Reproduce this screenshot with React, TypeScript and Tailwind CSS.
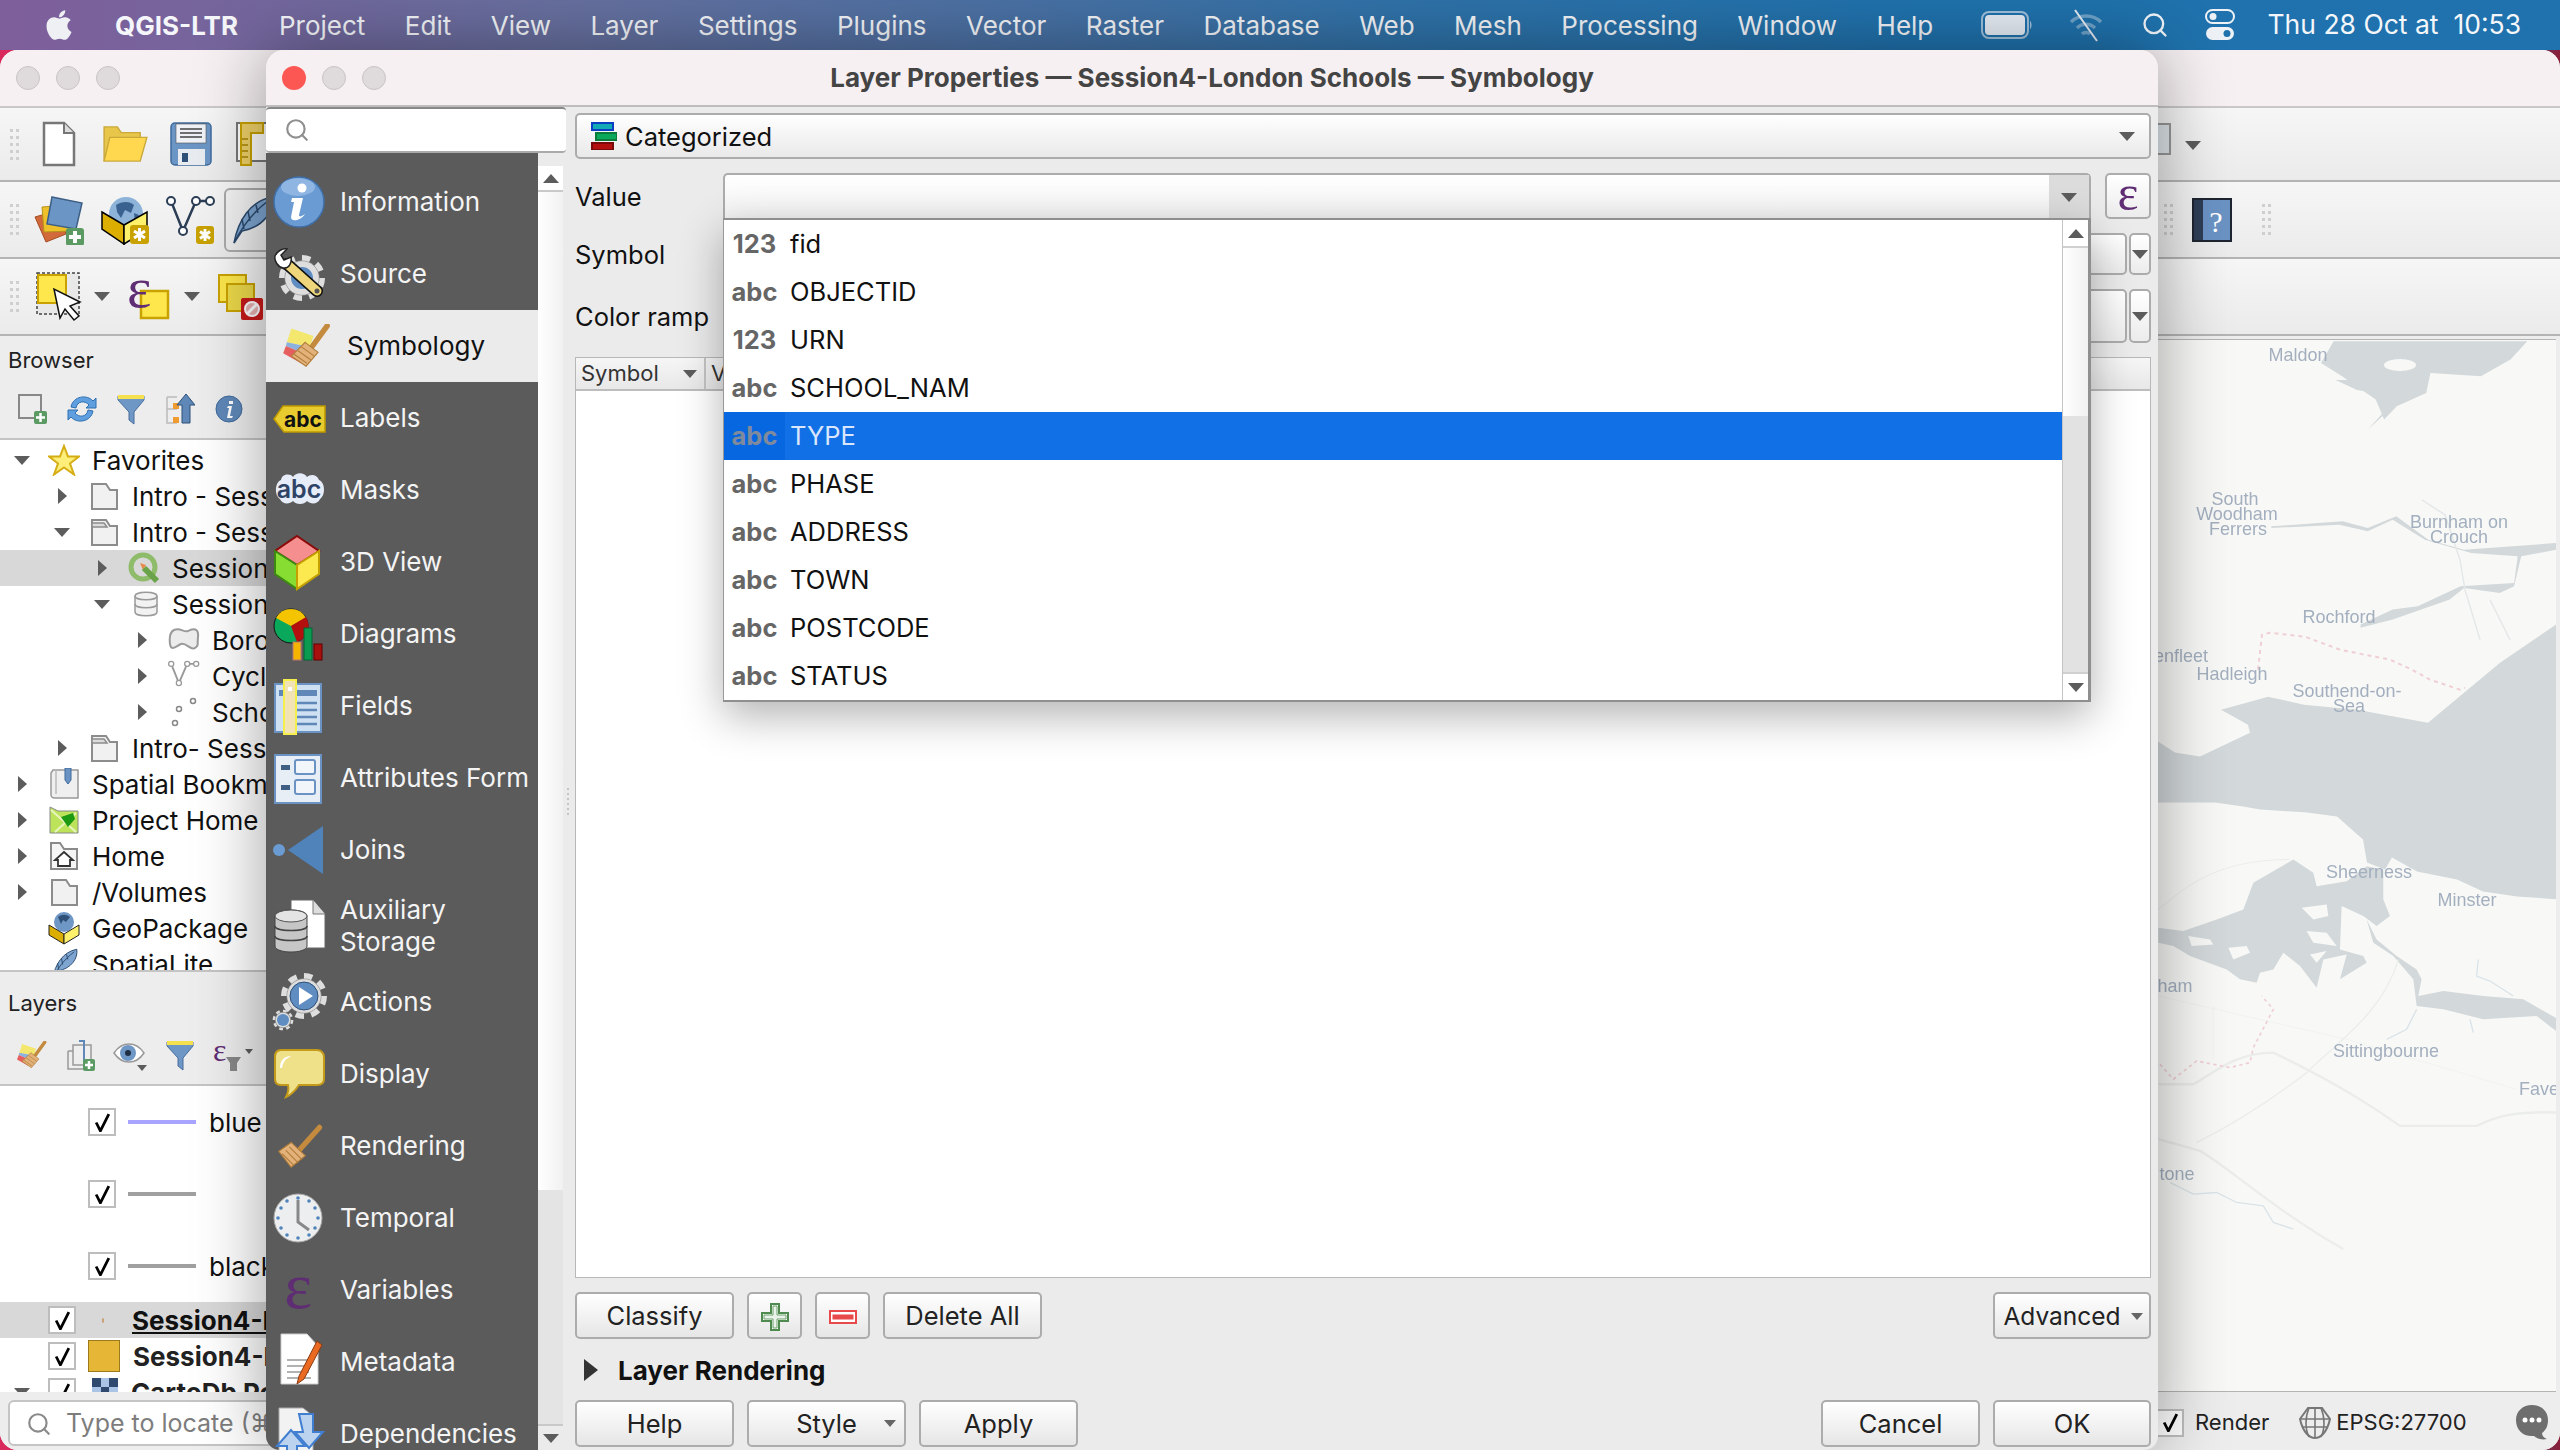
import { ReactNode } from "react";
import { FaApple } from "react-icons/fa";
import { Search } from "lucide-react";

const serif = "Liberation Serif, serif";

function Tri({ dir = "down", className = "" }: { dir?: "down" | "right" | "up"; className?: string }) {
  const pts = dir === "down" ? "0,0 16,0 8,9" : dir === "up" ? "0,9 16,9 8,0" : "0,0 9,8 0,16";
  const vb = dir === "right" ? "0 0 9 16" : "0 0 16 9";
  return (
    <svg viewBox={vb} className={className}>
      <polygon points={pts} fill="#5c5c5c" />
    </svg>
  );
}

function Grip() {
  return (
    <div className="grid w-[8px] grid-cols-2 gap-x-[3px] gap-y-[4px]">
      {Array.from({ length: 10 }).map((_, i) => (
        <span key={i} className="h-[3px] w-[3px] bg-[#cfcfcf]" />
      ))}
    </div>
  );
}

function Lights({ active }: { active?: boolean }) {
  return (
    <div className="flex items-center gap-[16px]">
      <span className={active ? "h-[24px] w-[24px] rounded-full bg-[#fc5753]" : "h-[24px] w-[24px] rounded-full border border-[#c8c3c5] bg-[#dfdadc]"} />
      <span className="h-[24px] w-[24px] rounded-full border border-[#c8c3c5] bg-[#dfdadc]" />
      <span className="h-[24px] w-[24px] rounded-full border border-[#c8c3c5] bg-[#dfdadc]" />
    </div>
  );
}

/* ---- toolbar icons ---- */
const NewDoc = () => (
  <svg viewBox="0 0 34 46" className="h-[46px] w-[34px]">
    <path d="M2 2h20l10 10v32H2z" fill="#fff" stroke="#777" strokeWidth="2.5" />
    <path d="M22 2v10h10" fill="#ddd" stroke="#777" strokeWidth="2" />
  </svg>
);
const Folder = () => (
  <svg viewBox="0 0 48 40" className="h-[38px] w-[46px]">
    <path d="M2 38V2h14l4 6h20v6" fill="#e8c64a" stroke="#c9a93a" strokeWidth="1.5" />
    <path d="M2 38l6-25h39l-7 25z" fill="#ffd84f" stroke="#c9a93a" strokeWidth="1.5" />
  </svg>
);
const Floppy = () => (
  <svg viewBox="0 0 42 44" className="h-[44px] w-[42px]">
    <rect x="1" y="1" width="40" height="42" rx="4" fill="#6b95c4" stroke="#3f6a9c" strokeWidth="1.5" />
    <rect x="6" y="2" width="30" height="19" fill="#eef1f5" stroke="#555" strokeWidth=".6" />
    <path d="M10 7h22M10 11h22M10 15h22" stroke="#444" strokeWidth="1.5" />
    <rect x="8" y="27" width="27" height="16" fill="#e8ecf1" />
    <rect x="12" y="31" width="6" height="9" fill="#2f5178" />
  </svg>
);
const LayoutIcon = () => (
  <svg viewBox="0 0 34 46" className="h-[46px] w-[34px]">
    <rect x="1" y="2" width="40" height="38" fill="#fff" stroke="#777" strokeWidth="2" />
    <path d="M5 2h22v10H15v32H5z" fill="#f0d26a" stroke="#c9a200" strokeWidth="2" />
    <path d="M6 18h6M6 24h6M6 30h6M6 36h6" stroke="#a88500" strokeWidth="1.5" />
  </svg>
);
const AddLayers = () => (
  <svg viewBox="0 0 50 50" className="h-[50px] w-[50px]">
    <path d="M1 22l24-7 7 24-20 8z" fill="#d2693a" stroke="#a34d23" />
    <path d="M8 12l26-2 2 26-26 1z" fill="#eec12a" stroke="#b8921a" />
    <path d="M20 5l30 6-6 26-29-5z" fill="#6b95c4" stroke="#3e5f85" strokeWidth="1.5" transform="translate(-2 -3)" />
    <rect x="32" y="33" width="18" height="18" rx="3" fill="#5b9a62" />
    <path d="M41 36v12M35 42h12" stroke="#fff" strokeWidth="4" />
  </svg>
);
const AddGlobe = () => (
  <svg viewBox="0 0 50 50" className="h-[50px] w-[50px]">
    <circle cx="26" cy="19" r="17" fill="#8db3d9" />
    <path d="M16 10c6-4 14-4 18 0l-3 8-6-3-4 8-4-6zM34 18l5 2-4 7z" fill="#3a6290" />
    <path d="M2 17l22 13v19L2 34z" fill="#dcae00" stroke="#000" strokeWidth="1.5" />
    <path d="M24 30l23-13v18L24 49z" fill="#fdf06a" stroke="#000" strokeWidth="1.5" />
    <rect x="30" y="30" width="19" height="19" rx="3" fill="#c9a200" />
    <path d="M39.500 33v13M34 36l11 7M45 36l-11 7" stroke="#fff" strokeWidth="3" />
  </svg>
);
const Asterisk = ({ x, y }: { x: number; y: number }) => (
  <g transform={`translate(${x} ${y})`}>
    <rect width="18" height="18" rx="3" fill="#c9a200" />
    <path d="M9 3v12M4 5.500l10 7M14 5.500l-10 7" stroke="#fff" strokeWidth="3" />
  </g>
);
const AddVector = ({ small }: { small?: boolean }) => (
  <svg viewBox="0 0 50 50" className={small ? "h-[34px] w-[34px]" : "h-[50px] w-[50px]"}>
    <path d="M5 6l12 30L30 6h14" fill="none" stroke={small ? "#999" : "#2c3e55"} strokeWidth={small ? 3 : 2.5} />
    <circle cx="5" cy="6" r="4" fill="#fff" stroke={small ? "#999" : "#2c3e55"} strokeWidth="2" />
    <circle cx="17" cy="36" r="4" fill="#fff" stroke={small ? "#999" : "#2c3e55"} strokeWidth="2" />
    <circle cx="30" cy="6" r="4" fill="#fff" stroke={small ? "#999" : "#2c3e55"} strokeWidth="2" />
    <circle cx="44" cy="6" r="4" fill="#fff" stroke={small ? "#999" : "#2c3e55"} strokeWidth="2" />
    {!small && <Asterisk x={30} y={31} />}
  </svg>
);
const Feather = ({ className }: { className: string }) => (
  <svg viewBox="0 0 40 50" className={className}>
    <path d="M2 48C6 26 18 6 40 2c2 14-8 30-30 34z" fill="#7ea6d1" stroke="#2c4a6e" strokeWidth="1.5" />
    <path d="M2 48C10 32 20 18 36 6M12 34l-2-10M18 26l-2-10M26 18l-2-8" stroke="#2c4a6e" strokeWidth="1.5" fill="none" />
  </svg>
);
const SelectIcon = () => (
  <svg viewBox="0 0 46 50" className="h-[50px] w-[46px]">
    <rect x="1" y="1" width="42" height="41" fill="#e8e8e8" stroke="#444" strokeWidth="1.5" strokeDasharray="3 2" />
    <rect x="2" y="3" width="28" height="28" fill="#fde74c" stroke="#c9a200" strokeWidth="2" />
    <path d="M18 17l6 29 5-9 9 11 5-4-9-10 10-4z" fill="#fff" stroke="#111" strokeWidth="1.5" />
  </svg>
);
const EpsSquare = () => (
  <svg viewBox="0 0 40 46" className="h-[46px] w-[40px] overflow-visible">
    <rect x="11" y="17" width="27" height="27" fill="#fde74c" stroke="#c9a200" strokeWidth="2.5" />
    <text x="-3" y="33" fontFamily={serif} fontSize="58" fill="#5f2d73">ε</text>
  </svg>
);
const DeselectIcon = () => (
  <svg viewBox="0 0 46 46" className="h-[46px] w-[46px]">
    <rect x="1" y="1" width="27" height="27" fill="#fde74c" stroke="#c9a200" strokeWidth="2" />
    <rect x="9" y="10" width="27" height="27" fill="#ecd94a" stroke="#c9a200" strokeWidth="2" />
    <rect x="23" y="24" width="22" height="22" rx="2" fill="#c81a1a" />
    <circle cx="34" cy="35" r="7" fill="#e9b3b3" stroke="#fff" strokeWidth="2" />
    <path d="M29 40l10-10" stroke="#fff" strokeWidth="3" />
  </svg>
);
const HelpBook = () => (
  <svg viewBox="0 0 40 44" className="h-[44px] w-[40px]">
    <rect x="0" y="0" width="40" height="44" fill="#1e2530" />
    <rect x="2" y="2" width="9" height="40" fill="#2e3e55" />
    <rect x="11" y="2" width="27" height="40" fill="#6a93c4" />
    <text x="24" y="34" textAnchor="middle" fontFamily={serif} fontSize="30" fill="#fff">?</text>
  </svg>
);

/* ---- small panel icons ---- */
const Mini = ({ children, w = 30, h = 32 }: { children: ReactNode; w?: number; h?: number }) => (
  <svg viewBox={`0 0 ${w} ${h}`} style={{ width: w, height: h }}>{children}</svg>
);
const Funnel = () => (
  <Mini>
    <path d="M2 3h26v4L18 19v12l-5-4v-8L2 7z" fill="#6f97c5" stroke="#486f9d" />
    <rect x="2" y="2" width="26" height="4" fill="#f5e04f" />
  </Mini>
);
const BrushIcon = ({ className, tri = false }: { className: string; tri?: boolean }) => (
  <svg viewBox="0 0 52 48" className={className}>
    {tri && (
      <>
        <path d="M9 5l24 8-4 12L4 20z" fill="#f4e76e" />
        <path d="M4 20l25 5-5 8L3 24z" fill="#8cb1dd" />
        <path d="M3 24l21 9-4 10L0 32z" fill="#e65f5f" />
      </>
    )}
    <path d={tri ? "M48 2L32 24" : "M48 3L24 30"} stroke="#c48a3e" strokeWidth="6" strokeLinecap="round" />
    <path d={tri ? "M24 20l14 11-13 15-16-11z" : "M16 20l16 15-16 13L2 30z"} fill="#e2b27a" stroke="#b07c3a" strokeWidth="1.2" />
    <path d={tri ? "M20 25l14 10M16 29l14 10M12 33l14 10" : "M14 25l14 14M10 29l14 14M6 33l13 13"} stroke="#b07c3a" strokeWidth="1.2" />
  </svg>
);

/* ---- sidebar icons ---- */
const Ic = ({ children }: { children: ReactNode }) => (
  <svg viewBox="0 0 54 56" className="h-[56px] w-[54px] shrink-0 overflow-visible">{children}</svg>
);
const Gear = ({ cx, cy, r }: { cx: number; cy: number; r: number }) => (
  <g>
    <circle cx={cx} cy={cy} r={r} fill="none" stroke="#dedede" strokeWidth={r * 0.3} strokeDasharray={`${r * 0.42} ${r * 0.36}`} />
    <circle cx={cx} cy={cy} r={r * 0.86} fill="#dedede" stroke="#8a8a8a" strokeWidth=".6" />
  </g>
);
const sideIcons: Record<string, ReactNode> = {
  Information: (
    <Ic>
      <circle cx="26" cy="28" r="25" fill="#6a9bd3" stroke="#3f6fa8" strokeWidth="1.5" />
      <ellipse cx="25" cy="13" rx="17" ry="9" fill="#8fb6e2" />
      <circle cx="29" cy="14" r="4.500" fill="#fff" />
      <path d="M19 24h11l-4 17c0 2 2 2 6-1-3 6-14 9-14 3l3-15h-3z" fill="#fff" />
    </Ic>
  ),
  Source: (
    <Ic>
      <Gear cx={29} cy={32} r={20} />
      <circle cx="29" cy="32" r="11" fill="#5f8dc2" />
      <path d="M14 18l30 27" stroke="#111" strokeWidth="12" strokeLinecap="round" />
      <path d="M14 18l30 27" stroke="#f0d67a" strokeWidth="9" strokeLinecap="round" />
      <circle cx="44" cy="45" r="2.500" fill="#555" />
      <path d="M2 10c2-5 8-8 12-7l-6 6 3 5 7-3c1 6-2 12-8 11C5 21 1 15 2 10z" fill="#fff" stroke="#222" strokeWidth="1.5" />
    </Ic>
  ),
  Symbology: <BrushIcon className="h-[44px] w-[52px] shrink-0" tri />,
  Labels: (
    <Ic>
      <path d="M10 16h42v26H11L1 29z" fill="#e8cc2f" stroke="#bf9b00" strokeWidth="1.5" />
      <text x="30" y="37" textAnchor="middle" fontFamily="Inter, sans-serif" fontWeight="700" fontSize="21" fill="#111">abc</text>
    </Ic>
  ),
  Masks: (
    <Ic>
      <path d="M8 18c1-6 9-7 12-3 3-5 11-5 14 0 3-3 10-3 12 3 6 2 7 15 1 19-2 5-9 6-13 2-3 4-11 4-14 0-4 4-11 3-13-2-6-4-5-17 1-19z" fill="#e6edf9" />
      <text x="26" y="36" textAnchor="middle" fontFamily="Inter, sans-serif" fontWeight="600" fontSize="25" fill="#2f4366">abc</text>
    </Ic>
  ),
  "3D View": (
    <Ic>
      <path d="M24 2l22 15-22 14L2 17z" fill="#f58f8f" stroke="#8a0a0a" strokeWidth="2" />
      <path d="M2 17l22 14v24L2 40z" fill="#88dd33" stroke="#3c8a10" strokeWidth="2" />
      <path d="M24 31l22-14v23L24 55z" fill="#fce94f" stroke="#c4a000" strokeWidth="2" />
    </Ic>
  ),
  Diagrams: (
    <Ic>
      <circle cx="18" cy="20" r="17" fill="#0aa85a" stroke="#111" />
      <path d="M18 20L3 12A17 17 0 0 1 33 12z" fill="#f5c400" />
      <path d="M18 20l15-9a17 17 0 0 1-9 25z" fill="#b40f0f" />
      <rect x="20" y="36" width="8" height="18" fill="#f5b400" stroke="#b77" />
      <rect x="31" y="22" width="8" height="32" fill="#0a9a50" stroke="#063" />
      <rect x="41" y="38" width="8" height="16" fill="#a80f0f" stroke="#600" />
    </Ic>
  ),
  Fields: (
    <Ic>
      <rect x="2" y="6" width="46" height="48" fill="#cfe0f2" stroke="#6a93c4" strokeWidth="2" />
      <rect x="6" y="12" width="38" height="6" fill="#5f88b8" />
      <path d="M10 25h34M10 32h34M10 39h34M10 46h34" stroke="#5f88b8" strokeWidth="2.500" />
      <rect x="11" y="2" width="12" height="54" fill="#f1e3b4" stroke="#f4ef4d" strokeWidth="2" />
      <rect x="15" y="9" width="4" height="4" fill="#fff" />
    </Ic>
  ),
  "Attributes Form": (
    <Ic>
      <rect x="2" y="5" width="46" height="48" fill="#e8eef5" stroke="#6a93c4" strokeWidth="2" />
      <rect x="8" y="15" width="9" height="5" fill="#3f5f85" />
      <rect x="8" y="35" width="9" height="5" fill="#3f5f85" />
      <rect x="22" y="10" width="20" height="14" rx="2" fill="#f2f5f9" stroke="#6a93c4" strokeWidth="2" />
      <rect x="22" y="30" width="20" height="14" rx="2" fill="#f2f5f9" stroke="#6a93c4" strokeWidth="2" />
    </Ic>
  ),
  Joins: (
    <Ic>
      <circle cx="6" cy="28" r="6" fill="#6a9bd3" />
      <path d="M50 4v48L15 28z" fill="#4f83ba" />
    </Ic>
  ),
  "Auxiliary Storage": (
    <Ic>
      <path d="M18 2h22l12 14v34H18z" fill="#fff" stroke="#666" />
      <path d="M40 2v14h12" fill="#ddd" stroke="#777" />
      <path d="M2 18c0-8 32-8 32 0v30c0 8-32 8-32 0z" fill="#c6c6c6" stroke="#444" />
      <ellipse cx="18" cy="18" rx="16" ry="6" fill="#e4e4e4" stroke="#555" />
      <path d="M2 28c0 6 32 6 32 0M2 38c0 6 32 6 32 0" fill="none" stroke="#444" strokeWidth="1.500" />
    </Ic>
  ),
  Actions: (
    <Ic>
      <Gear cx={31} cy={22} r={20} />
      <circle cx="31" cy="22" r="14" fill="#5f8dc2" stroke="#2f5178" />
      <path d="M26 13l14 9-14 9z" fill="#fff" />
      <Gear cx={10} cy={46} r={9} />
      <circle cx="10" cy="46" r="6" fill="#5f8dc2" />
    </Ic>
  ),
  Display: (
    <Ic>
      <path d="M8 4h36c4 0 7 3 7 7v22c0 4-3 6-7 6H26c-4 6-8 10-13 12 2-4 3-8 2-12H8c-4 0-6-2-6-6V11c0-4 2-7 6-7z" fill="#efe08a" stroke="#c49a1a" strokeWidth="2" />
      <path d="M7 22c0-8 4-12 12-12-6 2-9 6-10 12z" fill="#fff" />
    </Ic>
  ),
  Rendering: <BrushIcon className="h-[50px] w-[46px] shrink-0" />,
  Temporal: (
    <Ic>
      <circle cx="25" cy="28" r="24" fill="#eceef0" stroke="#aaa" />
      <g fill="#4f83ba">
        <circle cx="25" cy="8" r="1.800" /><circle cx="25" cy="48" r="1.800" /><circle cx="5" cy="28" r="1.800" /><circle cx="45" cy="28" r="1.800" />
        <circle cx="14" cy="11" r="1.800" /><circle cx="36" cy="11" r="1.800" /><circle cx="14" cy="45" r="1.800" /><circle cx="36" cy="45" r="1.800" />
        <circle cx="8" cy="18" r="1.800" /><circle cx="42" cy="18" r="1.800" /><circle cx="8" cy="38" r="1.800" /><circle cx="42" cy="38" r="1.800" />
      </g>
      <path d="M25 10v22l11 8" fill="none" stroke="#888" strokeWidth="3" />
    </Ic>
  ),
  Variables: (
    <Ic>
      <text x="25" y="46" textAnchor="middle" fontFamily={serif} fontSize="66" fill="#5f2d73">ε</text>
    </Ic>
  ),
  Metadata: (
    <Ic>
      <path d="M8 0h26l11 12v38H8z" fill="#fff" stroke="#ccc" />
      <path d="M14 26h22M14 32h24M14 38h22M14 44h24" stroke="#999" strokeWidth="1.500" />
      <path d="M44 7L26 42l-2 8 7-5 18-34z" fill="#ea6a22" stroke="#8a3a10" />
    </Ic>
  ),
  Dependencies: (
    <Ic>
      <path d="M6 2h24l10 8v48H6z" fill="#f2f2f2" stroke="#aaa" />
      <path d="M26 8h14v18h10L36 42 22 26h8z" fill="#bcd3f0" stroke="#3f7ed0" strokeWidth="2" />
      <path d="M14 60V40H4l14-16 14 16h-8v20z" fill="#bcd3f0" stroke="#3f7ed0" strokeWidth="2" />
    </Ic>
  ),
};

const sideItems = ["Information", "Source", "Symbology", "Labels", "Masks", "3D View", "Diagrams", "Fields", "Attributes Form", "Joins", "Auxiliary Storage", "Actions", "Display", "Rendering", "Temporal", "Variables", "Metadata", "Dependencies"];

/* ---- browser tree ---- */
const FolderOutline = ({ open }: { open?: boolean }) => (
  <svg viewBox="0 0 30 30" className="h-[30px] w-[30px]">
    <path d="M3 28V3h14l4 6h7v19z" fill="#f1f1f1" stroke="#8c8c8c" strokeWidth="2" />
    {open && <path d="M3 10h15l-3-4H3z" fill="#dcdcdc" stroke="#8c8c8c" strokeWidth="1.5" />}
  </svg>
);
const treeIcons: Record<string, ReactNode> = {
  star: (
    <svg viewBox="0 0 32 32" className="h-[32px] w-[32px]">
      <path d="M16 2l4 10.500h11l-9 7 4 11-10-7-10 7 4-11-9-7h11z" fill="#fdee7a" stroke="#d5ad13" strokeWidth="2" />
    </svg>
  ),
  folder: <FolderOutline />,
  folderOpen: <FolderOutline open />,
  qgis: (
    <svg viewBox="0 0 32 32" className="h-[32px] w-[32px]">
      <circle cx="15" cy="15" r="12" fill="none" stroke="#8ebc6a" strokeWidth="5" />
      <path d="M12 11l6 2-3 5z" fill="#e88a4a" />
      <path d="M16 16l13 13" stroke="#6ba34a" strokeWidth="6" />
    </svg>
  ),
  db: (
    <svg viewBox="0 0 26 28" className="ml-[3px] h-[28px] w-[26px]">
      <path d="M2 6c0-5 22-5 22 0v16c0 5-22 5-22 0z" fill="#f2f2f2" stroke="#999" strokeWidth="1.500" />
      <path d="M2 6c0 5 22 5 22 0M2 14c0 5 22 5 22 0" fill="none" stroke="#999" strokeWidth="1.500" />
    </svg>
  ),
  poly: (
    <svg viewBox="0 0 32 26" className="h-[26px] w-[32px]">
      <path d="M6 3c6-3 10 3 14 1 5-3 11-3 10 6s1 8-3 11-9-6-14-4-10 8-11 0 0-12 4-14z" fill="#ececec" stroke="#9a9a9a" strokeWidth="2" />
    </svg>
  ),
  line: <AddVector small />,
  points: (
    <svg viewBox="0 0 32 32" className="h-[32px] w-[32px]">
      <circle cx="25" cy="5" r="2.500" fill="#fff" stroke="#888" strokeWidth="1.500" />
      <circle cx="11" cy="13" r="2.500" fill="#fff" stroke="#888" strokeWidth="1.500" />
      <circle cx="7" cy="27" r="2.500" fill="#fff" stroke="#888" strokeWidth="1.500" />
    </svg>
  ),
  bookmark: (
    <svg viewBox="0 0 30 32" className="h-[32px] w-[30px]">
      <path d="M4 2h25v28H6c-3 0-4-2-4-3V5z" fill="#efefef" stroke="#999" strokeWidth="1.500" />
      <path d="M7 2v24" stroke="#bbb" strokeWidth="1.500" />
      <path d="M16 0h6v12l-3 4-3-4z" fill="#6a93c4" stroke="#3f6a9c" />
    </svg>
  ),
  projectHome: (
    <svg viewBox="0 0 30 30" className="h-[30px] w-[30px]">
      <path d="M1 28V2l8 4h20v22z" fill="#bde35a" stroke="#888" />
      <path d="M2 5l25 22M27 8L6 27" stroke="#e8f5c0" strokeWidth="2" />
      <path d="M12 12l12-4 2 6-7 8z" fill="#1d9a12" />
    </svg>
  ),
  home: (
    <svg viewBox="0 0 30 30" className="h-[30px] w-[30px]">
      <path d="M2 28V2h9l4 6h13v20z" fill="#f5f5f5" stroke="#8a8a8a" strokeWidth="2" />
      <path d="M15 11l9 8h-3v6H9v-6H6z" fill="#fff" stroke="#333" strokeWidth="1.800" />
    </svg>
  ),
  geo: (
    <svg viewBox="0 0 32 34" className="h-[34px] w-[32px]">
      <circle cx="16" cy="11" r="10" fill="#6f97c5" />
      <path d="M10 6c4-3 8-3 12 0l-4 5-3-2-2 4z" fill="#2f5178" />
      <path d="M1 14l15 9v10L1 24z" fill="#dcae00" stroke="#222" />
      <path d="M16 23l15-9v10l-15 9z" fill="#fdf06a" stroke="#222" />
    </svg>
  ),
  feather: <Feather className="h-[32px] w-[28px]" />,
};
const treeRows: { pad: string; caret?: "down" | "right"; icon: string; label: string; sel?: boolean }[] = [
  { pad: "pl-[12px]", caret: "down", icon: "star", label: "Favorites" },
  { pad: "pl-[52px]", caret: "right", icon: "folder", label: "Intro - Session 1" },
  { pad: "pl-[52px]", caret: "down", icon: "folderOpen", label: "Intro - Session 4" },
  { pad: "pl-[92px]", caret: "right", icon: "qgis", label: "Session4.qgz", sel: true },
  { pad: "pl-[92px]", caret: "down", icon: "db", label: "Session4.gpkg" },
  { pad: "pl-[132px]", caret: "right", icon: "poly", label: "Boroughs" },
  { pad: "pl-[132px]", caret: "right", icon: "line", label: "Cycle" },
  { pad: "pl-[132px]", caret: "right", icon: "points", label: "Schools" },
  { pad: "pl-[52px]", caret: "right", icon: "folderOpen", label: "Intro- Session 5" },
  { pad: "pl-[12px]", caret: "right", icon: "bookmark", label: "Spatial Bookmarks" },
  { pad: "pl-[12px]", caret: "right", icon: "projectHome", label: "Project Home" },
  { pad: "pl-[12px]", caret: "right", icon: "home", label: "Home" },
  { pad: "pl-[12px]", caret: "right", icon: "folder", label: "/Volumes" },
  { pad: "pl-[12px]", icon: "geo", label: "GeoPackage" },
  { pad: "pl-[12px]", icon: "feather", label: "SpatiaLite" },
];

function Check({ className = "" }: { className?: string }) {
  return (
    <span className={"flex h-[28px] w-[28px] shrink-0 items-center justify-center border-2 border-[#bdbdbd] bg-white " + className}>
      <svg viewBox="0 0 18 18" className="h-[19px] w-[19px]">
        <path d="M3 9l4 8L15 1" fill="none" stroke="#000" strokeWidth="2.600" />
      </svg>
    </span>
  );
}

function Btn({ children, className = "" }: { children: ReactNode; className?: string }) {
  return (
    <div className={"flex h-[47px] items-center justify-center rounded-[5px] border-2 border-[#acacac] bg-gradient-to-b from-white to-[#e6e6e6] pt-[2px] text-[25.5px] text-[#222] " + className}>
      {children}
    </div>
  );
}

const fields = [
  ["123", "fid"],
  ["abc", "OBJECTID"],
  ["123", "URN"],
  ["abc", "SCHOOL_NAM"],
  ["abc", "TYPE"],
  ["abc", "PHASE"],
  ["abc", "ADDRESS"],
  ["abc", "TOWN"],
  ["abc", "POSTCODE"],
  ["abc", "STATUS"],
];

const menus = [
  "Project", "Edit", "View", "Layer", "Settings", "Plugins", "Vector", "Raster", "Database", "Web", "Mesh", "Processing", "Window", "Help",
];

const mapLabels: [string, number, number][] = [
  ["Maldon", 2298, 361],
  ["South", 2235, 505],
  ["Woodham", 2237, 520],
  ["Ferrers", 2238, 535],
  ["Burnham on", 2459, 528],
  ["Crouch", 2459, 543],
  ["Rochford", 2339, 623],
  ["Hadleigh", 2232, 680],
  ["Southend-on-", 2347, 697],
  ["Sea", 2349, 712],
  ["Sheerness", 2369, 879],
  ["Minster", 2467, 907],
  ["Sittingbourne", 2386, 1058],
  ["Fave", 2539, 1096],
  ["ham", 2175, 993],
  ["tone", 2177, 1181],
  ["enfleet", 2181, 662],
];

function MapArt() {
  return (
    <svg viewBox="2158 340 398 1052" preserveAspectRatio="none" className="h-full w-[398px] blur-[0.5px]">
      <rect x="2158" y="340" width="402" height="1052" fill="#f8f9f7" />
      <g fill="#d3d8da">
        <path d="M2158 742L2175 753L2200 757L2250 733L2248 725L2221 710L2268 697L2304 705L2357 710L2428 723L2500 663L2560 622V900L2517 897L2483 892L2457 880L2417 872L2392 858L2385 870L2367 863L2363 840L2337 817L2307 813L2260 810L2243 807L2215 803H2158Z" />
        <path transform="translate(2000 380) scale(.357 .333)" d="M760 440L960 425L1030 445L1110 410L1200 480L1300 510L1560 490V510L1460 530L1440 620L1400 640L1300 625L1260 660L1180 690L1100 720L1010 745V735L1100 690L1170 680L1290 620L1440 610L1450 530L1320 520L1190 480L1100 420L1030 455L950 435L760 445Z" />
        <path transform="translate(1900 0) scale(.421 .333)" d="M1030 1025H1490L1450 1080L1380 1130L1260 1120L1250 1180L1180 1220L1150 1260L1130 1200L1050 1130L1000 1090Z" />
        <path transform="translate(2000 380) scale(.357 .333)" d="M940 0H1190L1130 60L1080 100L1030 150L1080 90L1110 50L1000 30Z" />
        <g transform="translate(2150 800) scale(.3333)">
          <path d="M650 200L700 210L700 300L720 350L680 380L640 350L575 320L570 450L640 470L650 490L570 540L590 465L520 480L500 565L450 500L400 460L370 510L330 520L320 550L270 540L230 510L120 470L70 440L25 430V385L100 395L200 360L280 330L310 250L430 180L490 220L500 260L590 245Z" />
          <path d="M650 360L680 420L740 470L800 510L815 540L805 590L880 575L1000 590L1120 600L1225 660V700L1160 650L1000 660L880 630L800 620L790 540L730 470L670 430Z" />
        </g>
      </g>
      <g fill="#f8f9f7">
        <ellipse cx="2400" cy="365" rx="16" ry="6" />
        <g transform="translate(2150 800) scale(.3333)">
          <path d="M115 410L180 420L190 435L125 440Z" />
          <path d="M235 445L290 440L300 460L250 480Z" />
          <path d="M455 325L530 315L535 350L490 360Z" />
          <path d="M470 395L530 400L560 440L490 430Z" />
          <path d="M480 465L530 455L500 490Z" />
        </g>
      </g>
      <g fill="none" stroke="#ebedeb" strokeWidth="1.500" transform="translate(2150 800) scale(.3333)">
        <path d="M25 855H130C180 830 250 760 370 760C450 800 580 860 750 980H980C1040 950 1100 935 1225 940" strokeWidth="7" />
        <path d="M25 1020L150 1055C230 1100 370 1230 580 1350" strokeWidth="7" />
        <path d="M140 1030C260 970 380 890 470 820C560 730 700 640 745 480" strokeWidth="4" />
        <path d="M25 590L590 720L1100 870" />
        <path d="M190 620V780" />
        <path d="M25 330C100 270 190 180 420 180" strokeWidth="3" />
      </g>
      <g fill="none" stroke="#f0cfd4" strokeWidth="2" strokeDasharray="4 4">
        <path transform="translate(2150 800) scale(.3333)" d="M30 795L70 840L140 785L240 805L300 790L310 745L370 630L335 590" strokeWidth="5" strokeDasharray="10 10" />
        <path d="M2258 670L2262 635L2270 633L2305 637L2340 650L2390 660L2412 670L2430 680L2460 690L2465 688" />
      </g>
      <g fill="none" stroke="#dae3e8" strokeWidth="1.500">
        <path transform="translate(2150 800) scale(.3333)" d="M60 1150L130 1185L200 1180L260 1210L340 1220L370 1270L430 1290" strokeWidth="4" />
        <path d="M2422 500L2445 515L2460 560L2465 590L2480 640M2490 600L2510 640" stroke="#e4e8e9" />
        <path transform="translate(2150 800) scale(.3333)" d="M985 480L980 530L1020 545L1090 590M960 660L970 700M800 630L770 690L710 720" strokeWidth="4" />
      </g>
      <g fontFamily="Liberation Sans, sans-serif" fontSize="18" fill="#a3afbf" textAnchor="middle">
        {mapLabels.map(([t, x, y]) => (
          <text key={t} x={x} y={y}>{t}</text>
        ))}
      </g>
    </svg>
  );
}

function MainWindow() {
  return (
    <div className="flex min-h-0 flex-1 flex-col overflow-hidden rounded-[18px] bg-[#ededed]">
      <div className="h-[56px] shrink-0 bg-[#f6f0f2] pl-[16px] pt-[16px]">
        <Lights />
      </div>
      <div className="flex h-[76px] shrink-0 items-center border-y-2 border-t-[#c9c9c9] border-b-[#b4b4b4] bg-gradient-to-b from-[#f6f6f6] to-[#ebebeb]">
        <div className="flex w-[2158px] shrink-0 items-center pl-[10px]">
          <Grip />
          <div className="ml-[24px]"><NewDoc /></div>
          <div className="ml-[26px]"><Folder /></div>
          <div className="ml-[22px]"><Floppy /></div>
          <div className="ml-[24px]"><LayoutIcon /></div>
        </div>
        <div className="h-[32px] w-[13px] -translate-y-[5px] border-2 border-l-0 border-[#999] bg-[#dfe6ea]" />
        <Tri className="ml-[14px] mt-[3px] h-[9px] w-[16px]" />
      </div>
      <div className="flex h-[77px] shrink-0 items-center border-b-2 border-[#b4b4b4] bg-gradient-to-b from-[#f6f6f6] to-[#ebebeb]">
        <div className="flex w-[2164px] shrink-0 items-center pl-[10px]">
          <Grip />
          <div className="ml-[16px]"><AddLayers /></div>
          <div className="ml-[16px]"><AddGlobe /></div>
          <div className="ml-[16px]"><AddVector /></div>
          <div className="ml-[8px] flex h-[64px] w-[60px] items-center rounded-[6px] border-2 border-[#aaa] pl-[6px]">
            <Feather className="h-[50px] w-[40px]" />
          </div>
        </div>
        <Grip />
        <div className="ml-[20px]"><HelpBook /></div>
        <div className="ml-[30px]"><Grip /></div>
      </div>
      <div className="flex h-[77px] shrink-0 items-center border-b-2 border-[#b4b4b4] bg-gradient-to-b from-[#f6f6f6] to-[#ebebeb] pl-[10px]">
        <Grip />
        <div className="ml-[18px]"><SelectIcon /></div>
        <Tri className="ml-[12px] h-[9px] w-[16px]" />
        <div className="ml-[20px]"><EpsSquare /></div>
        <Tri className="ml-[14px] h-[9px] w-[16px]" />
        <div className="ml-[18px]"><DeselectIcon /></div>
      </div>

      <div className="flex min-h-0 flex-1">
        <div className="flex w-[300px] shrink-0 flex-col bg-[#ededed]">
          <div className="flex h-[44px] items-center pl-[8px] pt-[4px] text-[22px] text-[#222]">Browser</div>
          <div className="flex h-[58px] items-center gap-[19px] pl-[18px]">
            <Mini w={30} h={32}>
              <rect x="1" y="2" width="22" height="23" fill="none" stroke="#888" strokeWidth="2" />
              <rect x="16" y="18" width="13" height="13" rx="2" fill="#5b9a62" />
              <path d="M22.500 20v9M18 24.500h9" stroke="#fff" strokeWidth="2.500" />
            </Mini>
            <Mini w={30} h={32}>
              <path d="M4 14C6 3 20 1 26 8l3-3v10H19l3-3C18 7 10 8 9 15zM26 18c-2 11-16 13-22 6l-3 3V17h10l-3 3c4 5 12 4 13-3z" fill="#5f9fe0" stroke="#2f6fb0" />
            </Mini>
            <Funnel />
            <Mini w={30} h={32}>
              <path d="M2 4h10M2 4v26h10M2 16h10" stroke="#bbb" strokeWidth="1.500" fill="none" />
              <rect x="8" y="10" width="6" height="6" fill="#ef9b2f" />
              <rect x="8" y="24" width="6" height="6" fill="#ef9b2f" />
              <path d="M21 1l9 11h-5v18h-8V12h-5z" fill="#5f88b8" stroke="#2f5178" />
            </Mini>
            <Mini w={30} h={32}>
              <circle cx="15" cy="16" r="13" fill="#5f88b8" stroke="#3f6a9c" />
              <path d="M14 13h4l-2 10h3l-1 2h-5l2-10h-2zM15 8h4v3h-4z" fill="#fff" />
            </Mini>
          </div>
          <div className="h-[532px] overflow-hidden border-t-2 border-[#c4c4c4] bg-white pt-[2px]">
            {treeRows.map((r) => (
              <div key={r.label} className={"flex h-[36px] items-center text-[26px] text-[#111] " + r.pad + (r.sel ? " bg-[#d8d8d8]" : "")}>
                <span className="flex w-[20px] shrink-0 justify-center">
                  {r.caret === "down" && <Tri className="h-[9px] w-[16px]" />}
                  {r.caret === "right" && <Tri dir="right" className="h-[16px] w-[9px]" />}
                </span>
                <span className="ml-[16px] flex h-[34px] w-[32px] shrink-0 items-center justify-center">{treeIcons[r.icon]}</span>
                <span className="ml-[12px] whitespace-nowrap pt-[1px]">{r.label}</span>
              </div>
            ))}
          </div>
          <div className="flex h-[56px] items-end border-t-2 border-[#c4c4c4] pb-[6px] pl-[8px] text-[22px] text-[#222]">Layers</div>
          <div className="flex h-[58px] items-center gap-[18px] pl-[17px]">
            <BrushIcon className="h-[28px] w-[30px]" tri />
            <Mini w={30} h={32}>
              <path d="M8 6h18v20H8zM3 12h5M3 12v18h20v-4" fill="#eee" stroke="#999" strokeWidth="1.500" />
              <path d="M14 2h5v20" fill="none" stroke="#5f88b8" strokeWidth="2" />
              <rect x="18" y="20" width="12" height="12" rx="2" fill="#5b9a62" />
              <path d="M24 22v8M20 26h8" stroke="#fff" strokeWidth="2.500" />
            </Mini>
            <Mini w={34} h={32}>
              <path d="M1 14c8-12 22-12 30 0-8 12-22 12-30 0z" fill="#fff" stroke="#999" strokeWidth="1.500" />
              <circle cx="15" cy="14" r="8" fill="#6f97c5" />
              <circle cx="15" cy="14" r="3" fill="#1f2f44" />
              <path d="M24 26h10l-5 6z" fill="#5c5c5c" />
            </Mini>
            <Funnel />
            <Mini w={40} h={32}>
              <text x="0" y="22" fontFamily={serif} fontSize="32" fill="#5f2d73">ε</text>
              <path d="M13 18h15l-4 6v8h-7v-8z" fill="#888" />
              <path d="M32 10h8l-4 5z" fill="#5c5c5c" />
            </Mini>
          </div>
          <div className="min-h-0 flex-1 overflow-hidden border-t-2 border-[#c4c4c4] bg-white">
            {[
              ["blue", "bg-[#a8a4ff]"],
              ["", "bg-[#a0a0a0]"],
              ["black", "bg-[#a0a0a0]"],
            ].map(([t, c], i) => (
              <div key={i} className="flex h-[72px] items-center pl-[88px] text-[26px] text-[#111]">
                <Check />
                <span className={"ml-[12px] h-[4px] w-[68px] " + c} />
                <span className="ml-[13px]">{t}</span>
              </div>
            ))}
            <div className="flex h-[36px] items-center bg-[#d8d8d8] pl-[48px] text-[26px] font-bold text-[#111]">
              <Check />
              <span className="ml-[26px] h-[5px] w-[5px] rounded-full border border-[#c9a27a] bg-[#e8c9a8]" />
              <span className="ml-[28px] whitespace-nowrap underline decoration-2 underline-offset-2">Session4-London</span>
            </div>
            <div className="flex h-[36px] items-center pl-[48px] text-[26px] font-bold text-[#222]">
              <Check />
              <span className="ml-[12px] h-[32px] w-[32px] shrink-0 border border-[#9a7a1a] bg-[#e6b637]" />
              <span className="ml-[13px] whitespace-nowrap">Session4-London</span>
            </div>
            <div className="flex h-[36px] items-center pl-[12px] text-[26px] font-bold text-[#222]">
              <span className="flex w-[20px] shrink-0 justify-center"><Tri className="h-[9px] w-[16px]" /></span>
              <Check className="ml-[16px]" />
              <span className="ml-[16px] grid h-[28px] w-[26px] shrink-0 grid-cols-3 grid-rows-3">
                <span className="bg-[#2f4a6e]" /><span className="bg-[#a9c4e4]" /><span className="bg-[#2f4a6e]" />
                <span className="bg-[#a9c4e4]" /><span className="bg-[#2f4a6e]" /><span className="bg-[#a9c4e4]" />
                <span className="bg-[#2f4a6e]" /><span className="bg-[#a9c4e4]" /><span className="bg-[#2f4a6e]" />
              </span>
              <span className="ml-[13px] whitespace-nowrap">CartoDb Positron</span>
            </div>
          </div>
        </div>
        <div className="mr-[4px] mt-[3px] flex min-w-0 flex-1 justify-end overflow-hidden border-y border-[#b4b4b4] bg-[#f8f9f7]">
          <MapArt />
        </div>
      </div>

      <div className="flex h-[58px] shrink-0 items-center bg-[#ededed] pt-[3px]">
        <div className="flex w-[266px] shrink-0 pl-[8px]">
          <div className="flex h-[46px] w-[300px] shrink-0 items-center rounded-[6px] border-2 border-[#c4c4c4] bg-white pl-[16px] pt-[2px] text-[25px] text-[#7d7d7d]">
            <Search className="h-[26px] w-[26px] text-[#8a8a8a]" strokeWidth={2} />
            <span className="ml-[14px] whitespace-nowrap">Type to locate (⌘K)</span>
          </div>
        </div>
        <div className="ml-[1892px] flex h-[28px] w-[26px] shrink-0 items-center justify-center border-2 border-l-0 border-[#bdbdbd] bg-white">
          <svg viewBox="0 0 18 18" className="h-[19px] w-[19px]">
            <path d="M3 9l4 8L15 1" fill="none" stroke="#000" strokeWidth="2.600" />
          </svg>
        </div>
        <span className="ml-[11px] text-[22px] text-[#222]">Render</span>
        <svg viewBox="0 0 32 34" className="ml-[30px] h-[34px] w-[32px] shrink-0">
          <path d="M1 13L9 2h14l8 11c-3 14-10 19-15 19S4 27 1 13z" fill="none" stroke="#777" strokeWidth="2" />
          <path d="M1 13h30M4 21h24M10 31c-4-8-4-20 0-29M22 31c4-8 4-20 0-29M16 2v30" fill="none" stroke="#777" strokeWidth="1.600" />
        </svg>
        <span className="ml-[5px] text-[22px] text-[#222]">EPSG:27700</span>
        <svg viewBox="0 0 34 38" className="ml-[48px] h-[38px] w-[34px] shrink-0">
          <path d="M17 1c9 0 16 6 16 15 0 7-3 11-6 13 0 3 2 5 5 6-5 1-10 0-13-3C8 33 1 26 1 16 1 7 8 1 17 1z" fill="#6e6e6e" />
          <circle cx="10" cy="16" r="2.500" fill="#fff" /><circle cx="17" cy="16" r="2.500" fill="#fff" /><circle cx="24" cy="16" r="2.500" fill="#fff" />
        </svg>
      </div>
    </div>
  );
}

function Dialog() {
  return (
    <div className="absolute left-[266px] top-[50px] flex h-[1400px] w-[1892px] flex-col overflow-hidden rounded-t-[18px] rounded-b-[14px] bg-[#ebebeb] shadow-[0_0_70px_rgba(0,0,0,0.38)]">
      <div className="relative flex h-[57px] shrink-0 items-center border-b-2 border-[#bdbdbd] bg-[#f6f0f2] pl-[16px]">
        <Lights active />
        <span className="absolute inset-x-0 text-center text-[26px] font-bold text-[#444]">Layer Properties — Session4-London Schools — Symbology</span>
      </div>
      <div className="flex min-h-0 flex-1">
        <div className="flex w-[306px] shrink-0 flex-col overflow-hidden">
          <div className="flex h-[46px] w-[300px] shrink-0 items-center rounded-[4px] border-t-2 border-b-2 border-t-[#888] border-b-[#aaa] bg-white pl-[18px]">
            <Search className="h-[26px] w-[26px] text-[#8f8f8f]" strokeWidth={2} />
          </div>
          <div className="flex min-h-0 flex-1">
            <div className="w-[272px] shrink-0 bg-[#5b5b5b] pt-[13px]">
              {sideItems.map((s) => {
                const sel = s === "Symbology";
                const tall = s === "Auxiliary Storage";
                return (
                  <div key={s} className={(tall ? "h-[80px] " : "h-[72px] ") + "flex items-center " + (sel ? "bg-[#ebebeb] pl-[14px] text-[#111]" : "pl-[7px] text-[#f4f4f4]")}>
                    <span className="flex w-[54px] shrink-0 justify-center">{sideIcons[s]}</span>
                    <span className="ml-[13px] whitespace-pre-line text-[26px] leading-[32px]">{tall ? "Auxiliary\nStorage" : s}</span>
                  </div>
                );
              })}
            </div>
            <div className="flex w-[25px] shrink-0 flex-col pt-[13px]">
              <div className="flex h-[26px] shrink-0 items-center justify-center border-b-2 border-[#c9c9c9] bg-white">
                <Tri dir="up" className="h-[9px] w-[16px]" />
              </div>
              <div className="h-[998px] shrink-0 bg-gradient-to-r from-white to-[#f1f1f1]" />
              <div className="flex-1 bg-[#e4e4e4]" />
              <div className="flex h-[26px] shrink-0 items-center justify-center border-t-2 border-[#c9c9c9]">
                <Tri className="h-[9px] w-[16px]" />
              </div>
            </div>
            <div className="flex flex-1 flex-col items-center justify-center gap-[3px]">
              {[0, 1, 2, 3, 4, 5].map((d) => (
                <span key={d} className="h-[2px] w-[2px] bg-[#c4c4c4]" />
              ))}
            </div>
          </div>
        </div>
        <div className="flex min-w-0 flex-1 flex-col pl-[3px] pr-[7px] pt-[6px] text-[25.5px] text-[#111]">
          <div className="flex h-[46px] shrink-0 items-center rounded-[5px] border-2 border-[#acacac] bg-gradient-to-b from-white to-[#e9e9e9] pl-[14px] pr-[14px]">
            <svg viewBox="0 0 26 28" className="h-[28px] w-[26px]">
              <rect x="1" y="1" width="21" height="7" fill="#11aab5" stroke="#0a3fc4" strokeWidth="2" />
              <rect x="5" y="11" width="21" height="7" fill="#0aa85a" stroke="#0b7a3a" strokeWidth="2" />
              <rect x="1" y="21" width="21" height="7" fill="#b40f0f" stroke="#7a0a0a" strokeWidth="2" />
            </svg>
            <span className="ml-[8px] pt-[2px]">Categorized</span>
            <Tri className="ml-auto h-[9px] w-[16px]" />
          </div>
          <div className="mt-[14px] flex h-[46px] shrink-0 items-center">
            <span className="w-[148px] shrink-0 pt-[2px]">Value</span>
            <div className="relative flex h-[46px] w-[1368px] shrink-0 rounded-t-[5px] border-2 border-b-0 border-[#acacac] bg-gradient-to-b from-white to-[#f2f2f2]">
              <div className="flex-1" />
              <div className="flex w-[40px] items-center justify-center bg-[#dcdcdc]">
                <Tri className="h-[9px] w-[16px]" />
              </div>
              <div className="absolute -left-[2px] -right-[2px] top-[43px] z-10 h-[484px] overflow-hidden border-y-2 border-l border-r-[3px] border-t-[#8f8f8f] border-b-[#8f8f8f] border-l-[#999] border-r-[#8f8f8f] bg-white shadow-[0_14px_40px_rgba(0,0,0,0.3)]">
                <div className="flex h-full">
                  <div className="w-[1338px] shrink-0">
                    {fields.map(([k, n]) => {
                      const sel = n === "TYPE";
                      return (
                        <div key={n} className={"flex h-[48px] items-center " + (sel ? "bg-[#1270e6] text-[#d9e6fb]" : "text-[#111]")}>
                          <span className={"flex h-full w-[61px] shrink-0 items-center justify-center font-bold " + (sel ? "bg-[#0767e0] text-[#7f8a9c]" : "text-[#666]")}>{k}</span>
                          <span className="ml-[5px]">{n}</span>
                        </div>
                      );
                    })}
                  </div>
                  <div className="flex flex-1 flex-col border-l border-[#c4c4c4]">
                    <div className="flex h-[28px] shrink-0 items-center justify-center border-b-2 border-[#d0d0d0]">
                      <Tri dir="up" className="h-[9px] w-[16px]" />
                    </div>
                    <div className="h-[168px] shrink-0 bg-gradient-to-r from-white to-[#f1f1f1]" />
                    <div className="flex-1 bg-[#e2e2e2]" />
                    <div className="flex h-[28px] shrink-0 items-center justify-center border-t-2 border-[#d0d0d0]">
                      <Tri className="h-[9px] w-[16px]" />
                    </div>
                  </div>
                </div>
              </div>
            </div>
            <div className="ml-[14px] flex h-[46px] w-[46px] shrink-0 items-center justify-center rounded-[5px] border-2 border-[#acacac] bg-gradient-to-b from-white to-[#ececec] pb-[6px] font-['Liberation_Serif',serif] text-[50px] leading-none text-[#5f2d73]">ε</div>
          </div>
          <div className="mt-[14px] flex h-[42px] shrink-0 items-center">
            <span className="w-[148px] shrink-0 pt-[2px]">Symbol</span>
            <div className="h-full flex-1 rounded-[5px] border-2 border-[#acacac] bg-gradient-to-b from-white to-[#ececec]" />
            <div className="ml-[2px] flex h-full w-[22px] shrink-0 items-center justify-center rounded-[5px] border-2 border-[#acacac] bg-gradient-to-b from-white to-[#ececec]">
              <Tri className="h-[9px] w-[16px]" />
            </div>
          </div>
          <div className="mt-[14px] flex h-[54px] shrink-0 items-center">
            <span className="w-[148px] shrink-0 pt-[2px]">Color ramp</span>
            <div className="h-full flex-1 rounded-[5px] border-2 border-[#acacac] bg-gradient-to-b from-white to-[#ececec]" />
            <div className="ml-[2px] flex h-full w-[22px] shrink-0 items-center justify-center rounded-[5px] border-2 border-[#acacac] bg-gradient-to-b from-white to-[#ececec]">
              <Tri className="h-[9px] w-[16px]" />
            </div>
          </div>
          <div className="mt-[14px] flex min-h-0 flex-1 flex-col border border-[#b8b8b8] bg-white">
            <div className="flex h-[33px] shrink-0 border-b-2 border-[#bdbdbd] bg-gradient-to-b from-[#f6f6f6] to-[#e8e8e8] text-[22px] leading-[31px] text-[#333]">
              <div className="flex w-[130px] items-center border-r-2 border-[#c4c4c4] pl-[5px] pr-[7px]">
                <span>Symbol</span>
                <Tri className="ml-auto h-[8px] w-[14px]" />
              </div>
              <span className="pl-[5px]">Value</span>
            </div>
          </div>
          <div className="mt-[14px] flex shrink-0 gap-[13px]">
            <Btn className="w-[159px]">Classify</Btn>
            <Btn className="w-[55px]">
              <svg viewBox="0 0 28 28" className="h-[28px] w-[28px]">
                <path d="M10 1h8v9h9v8h-9v9h-8v-9H1v-8h9z" fill="#fff" stroke="#4f8a4f" strokeWidth="2" />
                <path d="M12 3h4v9h9v4h-9v9h-4v-9H3v-4h9z" fill="#eaf3ea" stroke="#6aa06a" />
              </svg>
            </Btn>
            <Btn className="w-[55px]">
              <svg viewBox="0 0 28 14" className="h-[14px] w-[28px]">
                <rect x="1" y="1" width="26" height="12" fill="#fff" stroke="#e8494b" strokeWidth="2" />
                <rect x="3.500" y="4.500" width="21" height="5" fill="#e8494b" />
              </svg>
            </Btn>
            <Btn className="w-[159px]">Delete All</Btn>
            <Btn className="ml-auto w-[158px] gap-[10px] pl-[2px]">
              <span className="text-[24.5px]">Advanced</span>
              <svg viewBox="0 0 12 7" className="h-[7px] w-[12px]"><polygon points="0,0 12,0 6,7" fill="#666" /></svg>
            </Btn>
          </div>
          <div className="flex h-[61px] shrink-0 items-center pl-[9px]">
            <svg viewBox="0 0 14 22" className="h-[22px] w-[14px]"><polygon points="0,0 14,11 0,22" fill="#333" /></svg>
            <span className="ml-[20px] pt-[2px] text-[26px] font-bold text-[#111]">Layer Rendering</span>
          </div>
          <div className="flex h-[50px] shrink-0 gap-[13px]">
            <Btn className="w-[159px]">Help</Btn>
            <Btn className="relative w-[159px]">
              Style
              <svg viewBox="0 0 12 7" className="absolute right-[8px] top-[18px] h-[7px] w-[12px]"><polygon points="0,0 12,0 6,7" fill="#666" /></svg>
            </Btn>
            <Btn className="w-[159px]">Apply</Btn>
            <Btn className="ml-auto w-[159px]">Cancel</Btn>
            <Btn className="w-[158px] border-[#5a9fe6] from-[#f7f9fc] to-[#dfe7f0]">OK</Btn>
          </div>
        </div>
      </div>
    </div>
  );
}

export default function App() {
  return (
    <div className="relative flex h-[1450px] w-[2560px] flex-col overflow-hidden bg-[linear-gradient(90deg,#d9285b_0%,#d9285b_20%,#1f72ad_60%,#1f72ad_97%,#8a1f3a_100%)] font-['Inter',sans-serif]">
      <div className="flex h-[50px] shrink-0 items-center bg-[linear-gradient(90deg,#7e5e9b_0%,#67709f_22%,#2f72a8_55%,#1f72ad_75%)] pl-[44px] text-[26px] text-[#f4f6fa]">
        <FaApple className="h-[34px] w-[30px] text-[#eef0f4]" />
        <span className="ml-[41px] mr-[41px] font-bold">QGIS-LTR</span>
        <div className="flex items-center gap-[39.5px]">
          {menus.map((m) => (
            <span key={m}>{m}</span>
          ))}
        </div>
        <div className="ml-auto flex items-center pr-[39px]">
          <svg viewBox="0 0 52 28" className="h-[28px] w-[52px]">
            <rect x="1" y="1" width="46" height="26" rx="7" fill="none" stroke="#9fc1dc" strokeWidth="2" />
            <rect x="4" y="4" width="40" height="20" rx="4" fill="#e6edf6" />
            <path d="M49 10c2 1 2 7 0 8z" fill="#9fc1dc" />
          </svg>
          <svg viewBox="0 0 34 34" className="ml-[36px] h-[34px] w-[34px]">
            <path d="M2 14c8-8 22-8 30 0M8 20c5-5 13-5 18 0M13 26c2-2 6-2 8 0" fill="none" stroke="#6ea3c9" strokeWidth="3.500" />
            <path d="M6 2l22 31" stroke="#e6edf6" strokeWidth="2" />
          </svg>
          <Search className="ml-[38px] h-[28px] w-[28px] text-[#f0f4f8]" strokeWidth={2} />
          <svg viewBox="0 0 30 34" className="ml-[36px] h-[34px] w-[30px]">
            <rect x="1" y="2" width="28" height="13" rx="6.500" fill="none" stroke="#eef2f7" strokeWidth="2" />
            <circle cx="8" cy="8.500" r="3.500" fill="#eef2f7" />
            <rect x="1" y="19" width="28" height="13" rx="6.500" fill="#eef2f7" />
            <circle cx="22" cy="25.500" r="3.500" fill="#1f72ad" />
          </svg>
          <span className="ml-[33px] whitespace-pre text-[26.5px] text-[#f4f6fa]">Thu 28 Oct at  10:53</span>
        </div>
      </div>
      <MainWindow />
      <Dialog />
    </div>
  );
}
